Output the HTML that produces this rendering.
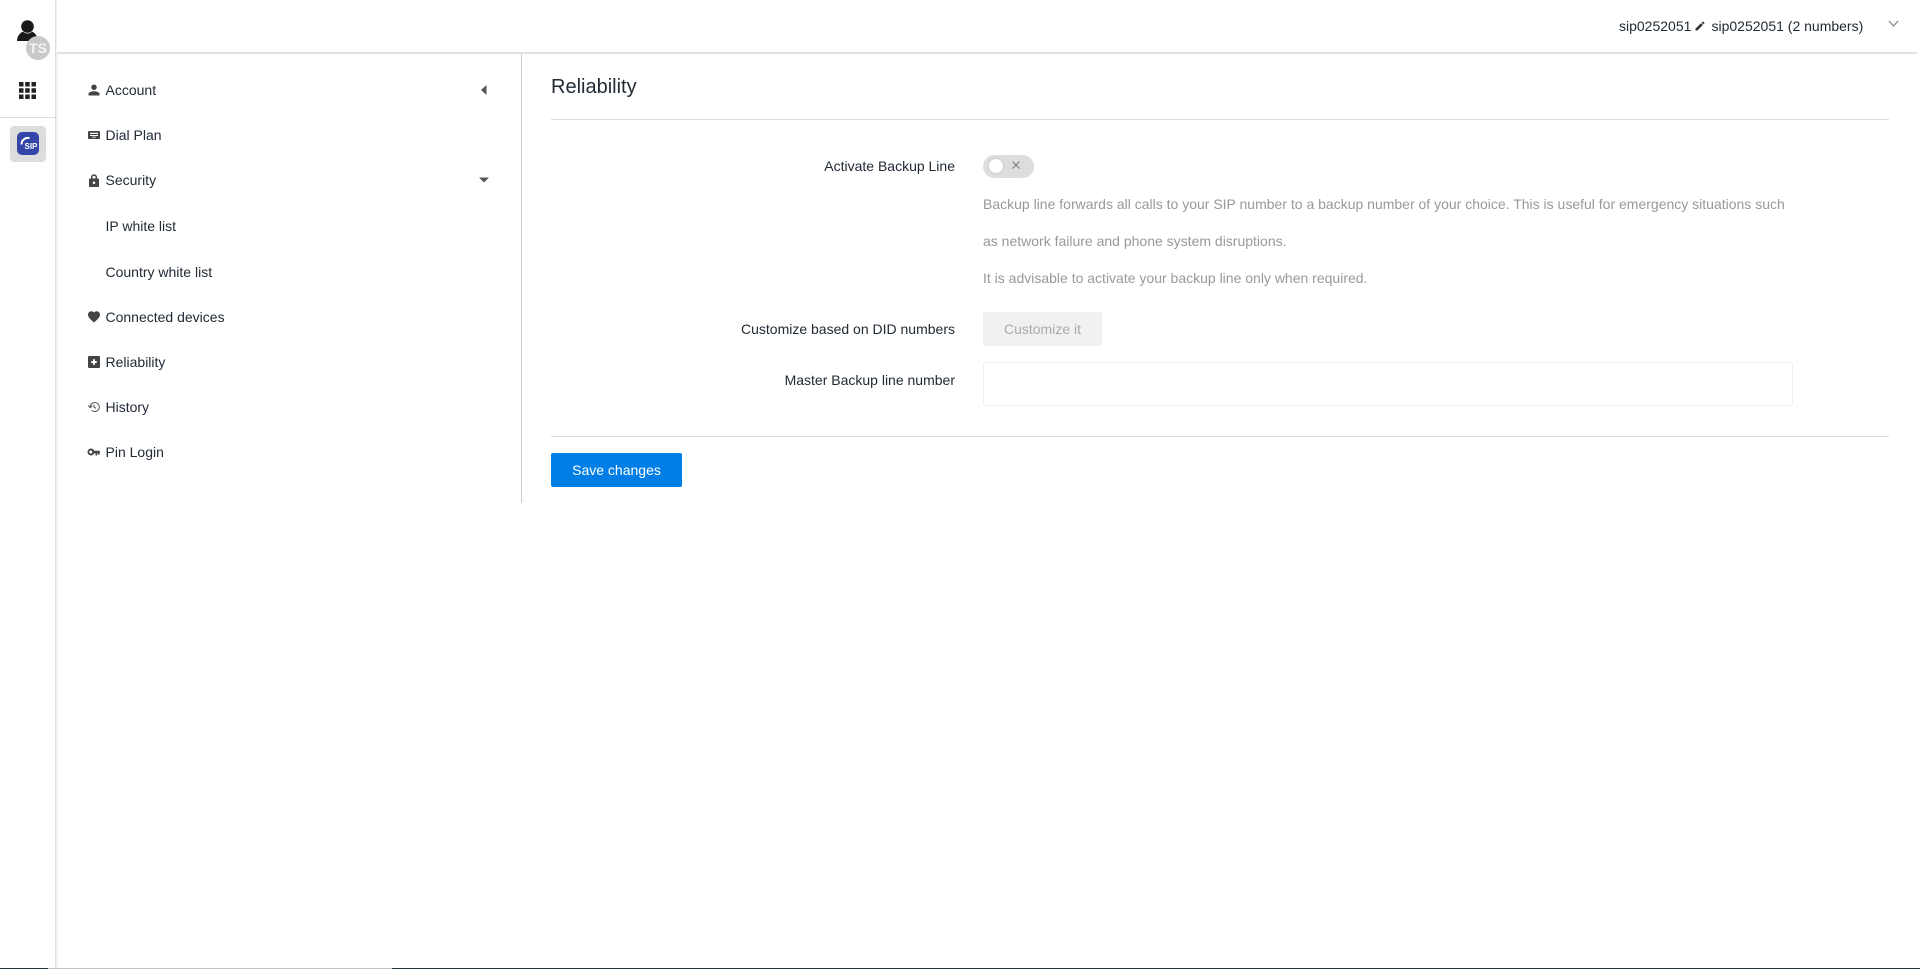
<!DOCTYPE html>
<html><head><meta charset="utf-8"><title>Reliability</title>
<style>
html,body{margin:0;padding:0;width:1920px;height:969px;overflow:hidden;background:#fff;font-family:"Liberation Sans",sans-serif;font-size:14px;color:#212b36}
.a{position:absolute}
.t{position:absolute;white-space:nowrap;line-height:20px}
.m{left:105.500px}
.l{right:965px;text-align:right;color:#212b36}
.h{left:983px;color:#999}
svg{position:absolute;fill:#444}
</style></head><body>
<!-- left rail -->
<div class="a" style="left:55px;top:0;width:1px;height:968px;background:#dedede"></div>
<div class="a" style="left:56px;top:0;width:3px;height:968px;background:linear-gradient(90deg,#eeeeee,#fff)"></div>
<svg style="left:17px;top:20px;fill:#1a1a1a" width="21" height="21" viewBox="0 0 21 21"><circle cx="10.500" cy="6.500" r="6.300"/><path d="M0 21c0-5 3-8 6-9.500 1.200 1.300 2.700 2 4.500 2s3.300-.7 4.500-2c3 1.500 6 4.500 6 9.500z"/></svg>
<div class="a" style="left:26px;top:36px;width:24px;height:24px;border-radius:50%;background:#c9c9c9;color:#f4f4f4;font-size:14px;font-weight:bold;line-height:24px;text-align:center">TS</div>
<svg style="left:19px;top:82px;fill:#222" width="17" height="17" viewBox="0 0 17 17"><path d="M0 0h4.500v4.500H0zM6.200 0h4.500v4.500H6.200zM12.500 0H17v4.500h-4.500zM0 6.200h4.500v4.500H0zM6.200 6.200h4.500v4.500H6.200zM12.500 6.200H17v4.500h-4.500zM0 12.500h4.500V17H0zM6.200 12.500h4.500V17H6.200zM12.500 12.500H17V17h-4.500z"/></svg>
<div class="a" style="left:0;top:117px;width:55px;height:1px;background:#ddd"></div>
<div class="a" style="left:10px;top:126px;width:36px;height:36px;border-radius:4px;background:#dcdcdc"></div>
<div class="a" style="left:17px;top:132px;width:22px;height:23px;border-radius:5px;background:#3346a8"></div>
<svg style="left:20px;top:136px;fill:none;stroke:#fff;stroke-width:2" width="11" height="11" viewBox="0 0 11 11"><path d="M1.500 8.500C1.500 4 5 1.500 9.500 2"/></svg>
<div class="t" style="left:24.500px;top:142px;font-size:8px;font-weight:bold;color:#fff;line-height:10px">SIP</div>
<!-- header -->
<div class="a" style="left:57px;top:0;width:1860px;height:52px;background:#fff;border-bottom:2px solid #e2e2e2"></div>
<div class="t" style="left:1619px;top:16px;color:#212b36">sip0252051</div>
<svg style="left:1694px;top:20px;fill:#333" width="12" height="12" viewBox="0 0 24 24"><path d="M3 17.250V21h3.750L17.810 9.940l-3.750-3.750zM20.710 7.040a1 1 0 0 0 0-1.410l-2.340-2.340a1 1 0 0 0-1.410 0l-1.830 1.830 3.750 3.750z"/></svg>
<div class="t" style="left:1711.500px;top:16px;color:#212b36">sip0252051 (2 numbers)</div>
<svg style="left:1888px;top:20px;fill:none;stroke:#999;stroke-width:1.500" width="11" height="8" viewBox="0 0 11 8"><path d="M1 1l4.500 5L10 1"/></svg>
<!-- menu -->
<div class="a" style="left:521px;top:54px;width:1px;height:449px;background:#ccc"></div>
<svg style="left:88px;top:84px" width="12" height="12" viewBox="0 0 24 24"><path d="M12 12a5.500 5.500 0 1 0 0-11 5.500 5.500 0 0 0 0 11zm0 2.500c-3.500 0-11 1.500-11 5V23h22v-3.500c0-3.500-7.500-5-11-5z"/></svg>
<div class="t m" style="top:80px">Account</div>
<svg style="left:481px;top:85px;fill:#555" width="6" height="10" viewBox="0 0 6 10"><path d="M5.500 0v10L0 5z"/></svg>
<svg style="left:88px;top:129px" width="12" height="12" viewBox="0 0 24 24"><path fill-rule="evenodd" d="M2 4h20a2 2 0 0 1 2 2v12a2 2 0 0 1-2 2H2a2 2 0 0 1-2-2V6a2 2 0 0 1 2-2zm2 3.500v2.500h16V7.500zM4 12v2h16v-2zm4 3.500V17h8v-1.500z"/></svg>
<div class="t m" style="top:125px">Dial Plan</div>
<svg style="left:88px;top:174px" width="12" height="13" viewBox="0 0 24 26"><path fill-rule="evenodd" d="M20 9h-2V6.500a6 6 0 0 0-12 0V9H4a2 2 0 0 0-2 2v13a2 2 0 0 0 2 2h16a2 2 0 0 0 2-2V11a2 2 0 0 0-2-2zM9 6.500a3 3 0 0 1 6 0V9H9zM12 20a2.500 2.500 0 1 1 0-5 2.500 2.500 0 0 1 0 5z"/></svg>
<div class="t m" style="top:170px">Security</div>
<svg style="left:479px;top:177px;fill:#555" width="10" height="6" viewBox="0 0 10 6"><path d="M0 .5h10L5 5.500z"/></svg>
<div class="t m" style="top:216px">IP white list</div>
<div class="t m" style="top:262px">Country white list</div>
<svg style="left:88px;top:311px" width="12" height="12" viewBox="0 0 24 24"><path d="M12 23l-2-1.800C4 15.800 0 12 0 7.200A6.600 6.600 0 0 1 6.600.5c2 0 4 1 5.400 2.500C13.400 1.500 15.400.5 17.400.5A6.600 6.600 0 0 1 24 7.200c0 4.800-4 8.600-10 14z"/></svg>
<div class="t m" style="top:307px">Connected devices</div>
<svg style="left:88px;top:356px" width="12" height="12" viewBox="0 0 24 24"><path fill-rule="evenodd" d="M2 0h20a2 2 0 0 1 2 2v20a2 2 0 0 1-2 2H2a2 2 0 0 1-2-2V2a2 2 0 0 1 2-2zm8 6.500V10H6.500v4H10v3.500h4V14h3.500v-4H14V6.500z"/></svg>
<div class="t m" style="top:352px">Reliability</div>
<svg style="left:88px;top:401px;fill:none;stroke:#555;stroke-width:2" width="12" height="12" viewBox="0 0 24 24"><path d="M4.500 12a9 9 0 1 1 2.700 6.500"/><path d="M12 7V12.500l4 2"/><path d="M.5 9l4 4.500 4-4.500"/></svg>
<div class="t m" style="top:397px">History</div>
<svg style="left:87px;top:448px" width="13" height="8" viewBox="0 0 26 16"><path fill-rule="evenodd" d="M14.500 5.500A7 7 0 1 0 14.500 10.500H17V15h3.500v-4.500H22V13h3.500V5.500zM7.500 11a3 3 0 1 1 0-6 3 3 0 0 1 0 6z"/></svg>
<div class="t m" style="top:442px">Pin Login</div>
<!-- content -->
<div class="t" style="left:551px;top:75px;font-size:20px;line-height:24px;color:#212b36">Reliability</div>
<div class="a" style="left:551px;top:119px;width:1338px;height:1px;background:#ddd"></div>
<div class="t l" style="top:156px">Activate Backup Line</div>
<div class="a" style="left:983px;top:155px;width:51px;height:23px;border-radius:12px;background:#ddd"></div>
<div class="a" style="left:989px;top:159px;width:14px;height:14px;border-radius:50%;background:#fff;box-shadow:0 0 2px #bbb"></div>
<svg style="left:1012px;top:161px;fill:none;stroke:#777;stroke-width:1.100" width="8" height="8" viewBox="0 0 9 9"><path d="M.5.500l8 8M8.500.500l-8 8"/></svg>
<div class="t h" style="top:194px">Backup line forwards all calls to your SIP number to a backup number of your choice. This is useful for emergency situations such</div>
<div class="t h" style="top:231px">as network failure and phone system disruptions.</div>
<div class="t h" style="top:268px">It is advisable to activate your backup line only when required.</div>
<div class="t l" style="top:319px">Customize based on DID numbers</div>
<div class="a" style="left:983px;top:312px;width:119px;height:34px;border-radius:2px;background:#f0f1f1;color:#aaa;text-align:center;line-height:34px">Customize it</div>
<div class="t l" style="top:370px">Master Backup line number</div>
<div class="a" style="left:983px;top:362px;width:808px;height:42px;border:1px solid #f0f0f0;border-radius:2px;background:#fff"></div>
<div class="a" style="left:551px;top:436px;width:1338px;height:1px;background:#ddd"></div>
<div class="a" style="left:551px;top:453px;width:131px;height:34px;border-radius:2px;background:#007ee5;color:#fff;text-align:center;line-height:34px">Save changes</div>
<!-- bottom strip -->
<div class="a" style="left:0;top:968px;width:1920px;height:1px;background:#24343c"></div>
<div class="a" style="left:48px;top:968px;width:344px;height:1px;background:#c4c4c4"></div>
</body></html>
